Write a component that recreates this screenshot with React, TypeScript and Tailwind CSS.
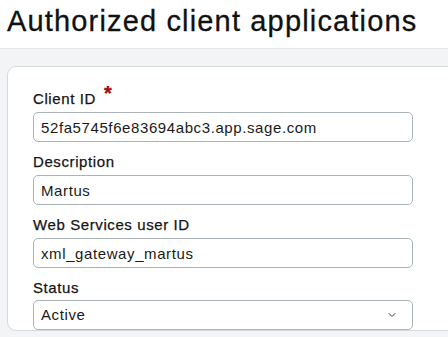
import { ChevronDown } from "lucide-react";

const fields = [
  { label: "Client ID", value: "52fa5745f6e83694abc3.app.sage.com", required: true },
  { label: "Description", value: "Martus" },
  { label: "Web Services user ID", value: "xml_gateway_martus" },
];

export default function App() {
  return (
    <div className="w-[448px] h-[337px] overflow-hidden bg-[#f2f4f5] font-['Liberation_Sans',Arial,sans-serif] text-[#141414]">
      {/* Page header */}
      <div className="h-[49px] bg-white border-b border-[#e3e7e8] pl-[7px] pt-[3px]">
        <h1 className="text-[29px] leading-[36px] tracking-[0.04em] text-[#111111] whitespace-nowrap [-webkit-text-stroke:0.3px_#111111]">
          Authorized client applications
        </h1>
      </div>

      {/* Form card */}
      <div className="pl-[7px] pt-[17px]">
        <div className="w-[480px] bg-white border border-[#d5dbdd] rounded-[9px] pl-[25px] pt-[22px]">
          <div className="flex flex-col gap-[10px] w-[380px]">
            {fields.map((f) => (
              <div key={f.label} className="flex flex-col">
                <label className="h-[20px] mb-[3px] text-[15px] leading-[20px] tracking-[0.04em] text-[#141414] whitespace-nowrap [-webkit-text-stroke:0.25px_#141414]">
                  {f.label}
                  {f.required && (
                    <span className="text-[#cc0000] font-bold text-[20px] leading-none align-top ml-[8px] relative top-[-6px]">*</span>
                  )}
                </label>
                <input
                  readOnly
                  value={f.value}
                  className="h-[30px] w-full border border-[#aab4b8] rounded-[5px] px-[7px] text-[15px] tracking-[0.04em] text-[#1a1a1a] outline-none bg-white"
                />
              </div>
            ))}
            <div className="flex flex-col">
              <label className="h-[20px] mb-[2px] text-[15px] leading-[20px] tracking-[0.04em] text-[#141414] [-webkit-text-stroke:0.25px_#141414]">
                Status
              </label>
              <div className="h-[30px] w-full border border-[#aab4b8] rounded-[5px] pl-[7px] pr-[14px] flex items-center justify-between text-[15px] tracking-[0.04em] text-[#1a1a1a]">
                <span>Active</span>
                <ChevronDown size={12} strokeWidth={2} className="text-[#3a3a3a]" />
              </div>
            </div>
          </div>
        </div>
      </div>
    </div>
  );
}
